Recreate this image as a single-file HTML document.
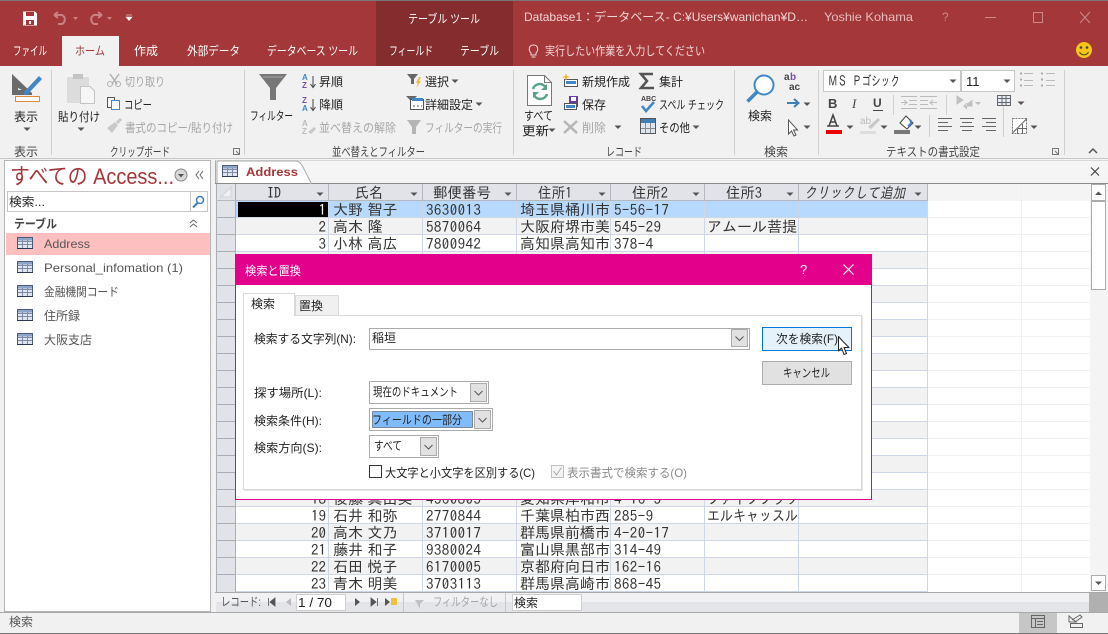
<!DOCTYPE html>
<html lang="ja"><head><meta charset="utf-8"><title>Access</title>
<style>
html,body{margin:0;padding:0;width:1108px;height:634px;overflow:hidden;background:#fff}
svg{display:block}
text{white-space:pre}
.u{font-family:"Liberation Sans","Noto Sans CJK JP",sans-serif;font-size:12px;fill:#444}
.d{fill:#222}.x{fill:#a6a6a6}.w{fill:#fff}
.g{font-family:"IPAGothic","Liberation Sans",sans-serif;font-size:15px;fill:#333;word-spacing:-3px}
.z{letter-spacing:.4px}
.j{font-family:"IPAGothic","Liberation Sans",sans-serif;font-size:15px;fill:#333}
.n{font-family:"Liberation Sans","Noto Sans CJK JP",sans-serif;font-size:12px;fill:#555}
.l{stroke:#cfd7e6;stroke-width:1;fill:none}
.s{fill:none;stroke:#666;stroke-width:1}
</style></head><body>
<svg xmlns="http://www.w3.org/2000/svg" width="1108" height="634" viewBox="0 0 1108 634">
<defs>
<g id="tbl"><rect x=".5" y=".5" width="15" height="11" fill="#dfe6f2" stroke="#4a5a78"/><rect x="1" y="1" width="14" height="2.5" fill="#8ea4c8"/><path d="M1 4.500H15M1 7.500H15M5.500 3V11M10.500 3V11" stroke="#7e8ca6" fill="none"/><path d="M0 11.500H16" stroke="#2b3a58"/></g>
<path id="dn" d="M-3.500 -1.500H3.500L0 2Z" fill="#555"/>
<path id="chev" d="M-4 -2L0 2L4 -2" fill="none" stroke="#555"/>
</defs>

<!-- window frame -->
<rect width="1108" height="634" fill="#f1f1f1"/>
<rect width="1108" height="66" fill="#a4373a"/>
<rect width="1108" height="1" fill="#777"/>
<rect x="376" y="1" width="137" height="65" fill="#842c2e"/>
<rect x="62" y="36" width="57" height="30" fill="#f1f1f1"/>

<!-- QAT -->
<path d="M23 11.500H35L37 13.500V25.500H23Z" fill="#fff"/>
<rect x="26" y="12" width="8" height="4" fill="#a4373a"/><rect x="26" y="20" width="8" height="5" fill="#a4373a"/><rect x="29" y="21" width="2" height="3" fill="#fff"/>
<path d="M54 15L58 12M54 15L58 18M54 15H62A5 5 0 0 1 62 24H58" fill="none" stroke="#c98184" stroke-width="2"/>
<path d="M73 17H78L75.500 20Z" fill="#c98184"/>
<path d="M102 15L98 12M102 15L98 18M102 15H94A5 5 0 0 0 94 24H98" fill="none" stroke="#c98184" stroke-width="2"/>
<path d="M107 17H112L109.500 20Z" fill="#c98184"/>
<path d="M126 15H132M126 17H132L129 20.500Z" fill="#fff" stroke="#fff" stroke-width=".6"/>

<text class="u w" x="408" y="23" textLength="72" lengthAdjust="spacingAndGlyphs">テーブル ツール</text>
<text class="u" style="fill:#f2d4d4" x="524" y="21" textLength="284" lengthAdjust="spacingAndGlyphs">Database1：データベース- C:¥Users¥wanichan¥D…</text>
<text class="u" style="fill:#e4bcbc" x="824" y="21" textLength="89" lengthAdjust="spacingAndGlyphs">Yoshie Kohama</text>
<text class="u" style="fill:#c98a8c" x="942" y="21">?</text>
<path d="M985 17.500H996" stroke="#c98a8c"/><rect x="1033.500" y="12.500" width="9" height="10" fill="none" stroke="#c98a8c"/><path d="M1080 12L1090 23M1090 12L1080 23" stroke="#c98a8c"/>

<!-- tabs -->
<text class="u w" x="13" y="55" textLength="34" lengthAdjust="spacingAndGlyphs">ファイル</text>
<text class="u" style="fill:#a4373a" x="75" y="55" textLength="30" lengthAdjust="spacingAndGlyphs">ホーム</text>
<text class="u w" x="134" y="55" textLength="24" lengthAdjust="spacingAndGlyphs">作成</text>
<text class="u w" x="187" y="55" textLength="53" lengthAdjust="spacingAndGlyphs">外部データ</text>
<text class="u w" x="267" y="55" textLength="91" lengthAdjust="spacingAndGlyphs">データベース ツール</text>
<text class="u w" x="389" y="55" textLength="44" lengthAdjust="spacingAndGlyphs">フィールド</text>
<text class="u w" x="460" y="55" textLength="39" lengthAdjust="spacingAndGlyphs">テーブル</text>
<path d="M531 53C528 50 529 45 533.500 45S539 50 536 53V55H531ZM531.500 57H535.500" fill="none" stroke="#f0d8d8"/>
<text class="u" style="fill:#f0d8d8" x="545" y="55" textLength="160" lengthAdjust="spacingAndGlyphs">実行したい作業を入力してください</text>
<circle cx="1084" cy="50" r="8" fill="#f5c518"/><circle cx="1081" cy="47.500" r="1.300" fill="#444"/><circle cx="1087" cy="47.500" r="1.300" fill="#444"/><path d="M1079.500 52A5 5 0 0 0 1088.500 52" fill="none" stroke="#444"/>

<!-- ribbon dividers -->
<path d="M51.500 70V155M244.500 70V155M513.500 70V155M734.500 70V155M818.500 70V155M1064.500 70V155" stroke="#d0d0d0"/>
<rect y="158" width="1108" height="1" fill="#c6c6c6"/>

<!-- 表示 -->
<path d="M12 74L32 93V95H12Z M18 88V90H22Z" fill="#6b6b6b" fill-rule="evenodd"/>
<path d="M24 92L39 76L42 79L27 95H24Z" fill="#3f87c6"/>
<rect x="15.500" y="96.500" width="24" height="5" fill="#fff" stroke="#e08a3a"/>
<text class="u d" x="14" y="121" textLength="24" lengthAdjust="spacingAndGlyphs">表示</text><use href="#dn" x="27" y="129"/>
<text class="u" x="14" y="156" textLength="24" lengthAdjust="spacingAndGlyphs">表示</text>

<!-- clipboard -->
<rect x="67" y="77" width="22" height="26" fill="#dcdcdc"/><rect x="73" y="74" width="10" height="5" fill="#c4c4c4"/>
<path d="M80.500 86.500H90L94.500 91V103.500H80.500Z" fill="#f6f6f6" stroke="#c4c4c4"/>
<text class="u d" x="58" y="121" textLength="42" lengthAdjust="spacingAndGlyphs">貼り付け</text><use href="#dn" x="81" y="129"/>
<path d="M110 74L117 84M119 74L112 84" stroke="#b0b0b0" stroke-width="1.500"/><circle cx="110" cy="84" r="2.500" fill="none" stroke="#b0b0b0"/><circle cx="118" cy="84" r="2.500" fill="none" stroke="#b0b0b0"/>
<text class="u x" x="125" y="86" textLength="40" lengthAdjust="spacingAndGlyphs">切り取り</text>
<rect x="107.500" y="97.500" width="7" height="10" fill="#fff" stroke="#555"/><rect x="111.500" y="100.500" width="8" height="9" fill="#fff" stroke="#3f87c6"/>
<text class="u d" x="124" y="109" textLength="28" lengthAdjust="spacingAndGlyphs">コピー</text>
<path d="M107 128L115 122L118 125L112 133ZM116 122L120 118L122 120L118 124Z" fill="#c8c8c8"/>
<text class="u x" x="125" y="132" textLength="108" lengthAdjust="spacingAndGlyphs">書式のコピー/貼り付け</text>
<text class="u" x="110" y="156" textLength="60" lengthAdjust="spacingAndGlyphs">クリップボード</text>
<path d="M233.500 148.500H239.500V154.500H233.500ZM236 151L239 154" fill="none" stroke="#777"/>

<!-- sort filter -->
<path d="M259 74H287L276 88V100H270V88Z" fill="#777"/><path d="M263 77H283" stroke="#aaa"/>
<text class="u d" x="250" y="120" textLength="43" lengthAdjust="spacingAndGlyphs">フィルター</text>
<text style="font:bold 8px 'Liberation Sans',sans-serif;fill:#3f87c6" x="302" y="80">A</text><text style="font:bold 8px 'Liberation Sans',sans-serif;fill:#7a4fa8" x="302" y="88">Z</text>
<path d="M313 76V87M310.500 84L313 87.500L315.500 84" fill="none" stroke="#444"/>
<text class="u d" x="319" y="86" textLength="24" lengthAdjust="spacingAndGlyphs">昇順</text>
<text style="font:bold 8px 'Liberation Sans',sans-serif;fill:#7a4fa8" x="302" y="103">Z</text><text style="font:bold 8px 'Liberation Sans',sans-serif;fill:#3f87c6" x="302" y="111">A</text>
<path d="M313 99V110M310.500 107L313 110.500L315.500 107" fill="none" stroke="#444"/>
<text class="u d" x="319" y="109" textLength="24" lengthAdjust="spacingAndGlyphs">降順</text>
<text style="font:bold 8px 'Liberation Sans',sans-serif;fill:#bbb" x="302" y="126">A</text><text style="font:bold 8px 'Liberation Sans',sans-serif;fill:#bbb" x="302" y="134">Z</text>
<path d="M308 132L314 127L316 129L311 134Z" fill="#c8c8c8"/>
<text class="u x" x="319" y="132" textLength="77" lengthAdjust="spacingAndGlyphs">並べ替えの解除</text>
<path d="M407 74H418L414 79V84H411V79Z" fill="#666"/><path d="M419 77L416 83H418L416 88L421 81H419L421 77Z" fill="#f0b840"/>
<text class="u d" x="425" y="86" textLength="24" lengthAdjust="spacingAndGlyphs">選択</text><use href="#dn" x="455" y="81"/>
<path d="M406 96H417L413 100V103H410V100Z" fill="#666"/><rect x="410.500" y="99.500" width="13" height="10" fill="#fff" stroke="#555"/><rect x="412" y="98" width="11" height="3" fill="#3f87c6"/><path d="M413 106H415M417 106H419M421 106H422" stroke="#555"/>
<text class="u d" x="425" y="109" textLength="48" lengthAdjust="spacingAndGlyphs">詳細設定</text><use href="#dn" x="479" y="104"/>
<path d="M407 120H421L416 127V134H412V127Z" fill="#b5b5b5"/>
<text class="u x" x="425" y="132" textLength="77" lengthAdjust="spacingAndGlyphs">フィルターの実行</text>
<text class="u" x="332" y="156" textLength="93" lengthAdjust="spacingAndGlyphs">並べ替えとフィルター</text>

<!-- record group -->
<path d="M527.500 75.500H544.500L551.500 82.500V105.500H527.500Z" fill="#fff" stroke="#777"/><path d="M544.500 75.500V82.500H551.500" fill="none" stroke="#777"/>
<path d="M533 89A7 7 0 0 1 546 88M547 94A7 7 0 0 1 534 95" fill="none" stroke="#5aa08c" stroke-width="2.500"/><path d="M547 84V90H541Z M533 98V92H539Z" fill="#5aa08c"/>
<text class="u d" x="524" y="120" textLength="29" lengthAdjust="spacingAndGlyphs">すべて</text>
<text class="u d" x="522" y="135" textLength="27" lengthAdjust="spacingAndGlyphs">更新</text><use href="#dn" x="552" y="130"/>
<rect x="564.500" y="79.500" width="13" height="7" fill="#fff" stroke="#555"/><rect x="566" y="81" width="10" height="3" fill="#3f87c6"/><path d="M566 73L567 76L570 77L567 78L566 81L565 78L562 77L565 76Z" fill="#f0b840"/>
<text class="u d" x="582" y="86" textLength="48" lengthAdjust="spacingAndGlyphs">新規作成</text>
<rect x="569" y="96" width="9" height="11" fill="#6a3d9a"/><rect x="571" y="97" width="5" height="4" fill="#fff"/><rect x="564.500" y="103.500" width="12" height="6" fill="#fff" stroke="#555"/><rect x="566" y="105" width="9" height="3" fill="#3f87c6"/>
<text class="u d" x="582" y="109" textLength="24" lengthAdjust="spacingAndGlyphs">保存</text>
<path d="M564 121L577 133M577 121L564 133" stroke="#b5b5b5" stroke-width="2.500"/>
<text class="u x" x="582" y="132" textLength="24" lengthAdjust="spacingAndGlyphs">削除</text><use href="#dn" x="618" y="127"/>
<path d="M653 74H641L647 81L641 88H654" fill="none" stroke="#555" stroke-width="2.500"/>
<text class="u d" x="659" y="86" textLength="24" lengthAdjust="spacingAndGlyphs">集計</text>
<text style="font:bold 7px 'Liberation Sans',sans-serif;fill:#444" x="641" y="101">ABC</text><path d="M642 106L646 111L654 102" fill="none" stroke="#3f87c6" stroke-width="2.500"/>
<text class="u d" x="659" y="109" textLength="65" lengthAdjust="spacingAndGlyphs">スペル チェック</text>
<rect x="640.500" y="118.500" width="15" height="15" fill="#dfe6f2" stroke="#555"/><rect x="641" y="119" width="14" height="4" fill="#3f7fb8"/><path d="M641 128.500H655M645.500 123V133M650.500 123V133" stroke="#888"/>
<text class="u d" x="659" y="132" textLength="31" lengthAdjust="spacingAndGlyphs">その他</text><use href="#dn" x="696" y="127"/>
<text class="u" x="606" y="156" textLength="36" lengthAdjust="spacingAndGlyphs">レコード</text>

<!-- find -->
<circle cx="764" cy="85" r="9.500" fill="#fff" stroke="#3f87c6" stroke-width="2"/><path d="M757 92L747.500 101.500" stroke="#3f87c6" stroke-width="3.500"/>
<text class="u d" x="748" y="120" textLength="24" lengthAdjust="spacingAndGlyphs">検索</text>
<text style="font:bold 10px 'Liberation Sans',sans-serif;fill:#444" x="784" y="80">a</text><text style="font:bold 10px 'Liberation Sans',sans-serif;fill:#7a4fa8" x="790" y="80">b</text><text style="font:bold 10px 'Liberation Sans',sans-serif;fill:#444" x="789" y="90">ac</text>
<path d="M787 103H798M794 99L798.500 103L794 107" fill="none" stroke="#3f7fb8" stroke-width="2"/><use href="#dn" x="807" y="104"/>
<path d="M788.500 120V134L791.500 131L794 136L796 135L793.500 130H797.500Z" fill="#fff" stroke="#555"/><use href="#dn" x="807" y="127"/>
<text class="u" x="764" y="156" textLength="24" lengthAdjust="spacingAndGlyphs">検索</text>

<!-- text format -->
<rect x="823.500" y="70.500" width="137" height="21" fill="#fff" stroke="#c6c6c6"/><rect x="961.500" y="70.500" width="53" height="21" fill="#fff" stroke="#c6c6c6"/>
<text class="j" style="font-size:14px" x="828" y="86" textLength="72" lengthAdjust="spacingAndGlyphs">ＭＳ Ｐゴシック</text><use href="#dn" x="953" y="81"/>
<text class="u d" style="font-size:13px" x="966" y="86">11</text><use href="#dn" x="1007" y="81"/>
<path d="M1024 73.500H1033M1024 80.500H1033M1024 85.500H1033M1046 73.500H1055M1046 80.500H1055M1046 85.500H1055" stroke="#bbb"/>
<path d="M1020 73.500h2M1020 79.500h2M1020 85.500h2M1041 73.500h2M1041 79.500h2M1041 85.500h2" stroke="#aaa" stroke-width="2"/>
<text style="font:bold 13px 'Liberation Sans',sans-serif;fill:#444" x="828" y="108">B</text>
<text style="font:italic 13px 'Liberation Serif',serif;fill:#444" x="852" y="108">I</text>
<text style="font:bold 12px 'Liberation Sans',sans-serif;fill:#444" x="873" y="107">U</text><path d="M873 110.500H883" stroke="#444"/>
<path d="M893.500 95V115M946.500 95V115M1003.500 95V115" stroke="#d0d0d0"/>
<path d="M901 96.500H917M909 100.500H917M909 104.500H917M901 108.500H917M901 102.500H907M904 100L907 102.500L904 105M920 96.500H937M920 100.500H928M920 104.500H928M920 108.500H937M930 102.500H937M933 100L930 102.500L933 105" fill="none" stroke="#bbb"/>
<path d="M957 96V104L963 100ZM972 100V106H964M967 103L964 106L967 109" fill="#c0c0c0" stroke="#c0c0c0"/><path d="M975 102H981L978 105Z" fill="#bbb"/>
<rect x="997.500" y="95.500" width="13" height="10" fill="#e6ecf6" stroke="#666"/><path d="M998 98.500H1010M998 102.500H1010M1002 96V105M1006 96V105" stroke="#666"/>
<use href="#dn" x="1021" y="103"/>
<path d="M827 126H839M829 126L833 115L837 126M830 122H836" fill="none" stroke="#444" stroke-width="1.500"/><rect x="826" y="130" width="16" height="4" fill="#e00"/><use href="#dn" x="850" y="127"/>
<text style="font:10px 'Liberation Sans',sans-serif;fill:#bbb" x="860" y="124">ab</text><path d="M868 127L878 118L880 120L871 129Z" fill="#c8c8c8"/><rect x="860" y="131" width="16" height="3" fill="#ddd"/><use href="#dn" x="884" y="127"/>
<path d="M900 123L906 116L913 123L907 129Z" fill="#fff" stroke="#444"/><path d="M910 120C912 122 911 125 908 126" fill="none" stroke="#3f7fb8" stroke-width="2"/><rect x="894" y="130" width="16" height="4" fill="#777"/><use href="#dn" x="918" y="127"/>
<path d="M929.500 115V137M1003.500 115V137" stroke="#d0d0d0"/>
<path d="M938 119.500H952M938 123.500H948M938 127.500H952M938 131.500H948M960 119.500H974M962 123.500H972M960 127.500H974M962 131.500H972M982 119.500H996M986 123.500H996M982 127.500H996M986 131.500H996" stroke="#666" transform="translate(0,-1)"/>
<rect x="1012.500" y="118.500" width="14" height="15" fill="#fff" stroke="#777" stroke-dasharray="2 1"/><path d="M1012 133.500L1027 118.500M1017.500 129V134M1022.500 124V134M1018 128.500H1027" stroke="#666" fill="none"/><use href="#dn" x="1034" y="127"/>
<text class="u" x="886" y="156" textLength="94" lengthAdjust="spacingAndGlyphs">テキストの書式設定</text>
<path d="M1052.500 148.500H1058.500V154.500H1052.500ZM1055 151L1058 154" fill="none" stroke="#777"/>
<path d="M1089 153L1093 149L1097 153" fill="none" stroke="#555" stroke-width="1.500"/>

<!-- nav pane -->
<rect x="0" y="159" width="215" height="453" fill="#f1f1f1"/>
<rect x="4.500" y="160.500" width="206" height="451" fill="#fff" stroke="#b5b5b5"/>
<text class="u" style="font-size:22px;fill:#a4373a" x="10" y="184" textLength="164" lengthAdjust="spacingAndGlyphs">すべての Access...</text>
<circle cx="181" cy="175" r="6" fill="#d8d8d8" stroke="#888"/><path d="M178 174H184L181 177.500Z" fill="#555"/>
<path d="M199 171L196 175L199 179M203 171L200 175L203 179" fill="none" stroke="#666"/>
<rect x="7.500" y="191.500" width="200" height="20" fill="#fff" stroke="#c6c6c6"/><path d="M190.500 192V211" stroke="#c6c6c6"/>
<text class="u d" x="9" y="206" textLength="36" lengthAdjust="spacingAndGlyphs">検索...</text>
<circle cx="200" cy="200" r="3.500" fill="none" stroke="#3f7fb8" stroke-width="1.500"/><path d="M197.500 203L193 207.500" stroke="#3f7fb8" stroke-width="2"/>
<text class="u" style="font-weight:700" x="14" y="228" textLength="43" lengthAdjust="spacingAndGlyphs">テーブル</text>
<path d="M190 223L193.500 220L197 223M190 227L193.500 224L197 227" fill="none" stroke="#666"/>
<rect x="6" y="233" width="204" height="22" fill="#fdbfbf"/>
<use href="#tbl" x="17" y="237"/><use href="#tbl" x="17" y="261"/><use href="#tbl" x="17" y="285"/><use href="#tbl" x="17" y="309"/><use href="#tbl" x="17" y="333"/>
<text class="n" x="44" y="248" textLength="46" lengthAdjust="spacingAndGlyphs">Address</text>
<text class="n" x="44" y="272" textLength="139" lengthAdjust="spacingAndGlyphs">Personal_infomation (1)</text>
<text class="n" x="44" y="296" textLength="75" lengthAdjust="spacingAndGlyphs">金融機関コード</text>
<text class="n" x="44" y="320" textLength="36" lengthAdjust="spacingAndGlyphs">住所録</text>
<text class="n" x="44" y="344" textLength="48" lengthAdjust="spacingAndGlyphs">大阪支店</text>

<!-- doc tab strip -->
<rect x="215" y="159" width="893" height="25" fill="#f5f5f5"/>
<rect x="215" y="160" width="893" height="1" fill="#d8d8d8"/>
<path d="M215.500 183V160.500" stroke="#aaa"/>
<path d="M217 184V163Q217 161 219 161H296Q300 161 303 167L311 183V184Z" fill="#fff" stroke="#aaa"/>
<use href="#tbl" x="222" y="165"/>
<text class="u" style="font-weight:700;fill:#a4373a" x="246" y="176" textLength="52" lengthAdjust="spacingAndGlyphs">Address</text>
<path d="M1091 167.500L1099 175.500M1099 167.500L1091 175.500" stroke="#444" stroke-width="1.200"/>
<path d="M215 183.500H310M311 183.500H1108" stroke="#8a8a8a"/>

<!-- datasheet -->
<rect x="216" y="184" width="892" height="408" fill="#fff"/>
<rect x="216" y="184" width="19" height="408" fill="#e1e3e8"/>
<rect x="216" y="184" width="711" height="17" fill="#e1e3e8"/>
<rect x="927" y="184" width="163" height="17" fill="#f4f4f4"/>
<path d="M221 197L231 187V197Z" fill="#eef0f3" stroke="#d0d3d8"/>
<!-- alternating rows -->
<rect x="235" y="218" width="692" height="17" fill="#f2f2f2"/><rect x="235" y="252" width="692" height="17" fill="#f2f2f2"/><rect x="235" y="286" width="692" height="17" fill="#f2f2f2"/><rect x="235" y="320" width="692" height="17" fill="#f2f2f2"/><rect x="235" y="354" width="692" height="17" fill="#f2f2f2"/><rect x="235" y="388" width="692" height="17" fill="#f2f2f2"/><rect x="235" y="422" width="692" height="17" fill="#f2f2f2"/><rect x="235" y="456" width="692" height="17" fill="#f2f2f2"/><rect x="235" y="490" width="692" height="17" fill="#f2f2f2"/><rect x="235" y="524" width="692" height="17" fill="#f2f2f2"/><rect x="235" y="558" width="692" height="17" fill="#f2f2f2"/>
<rect x="235" y="201" width="692" height="17" fill="#b7d9fd"/>
<rect x="238" y="202" width="90" height="15" fill="#000"/>
<!-- faint lines right area -->
<path d="M927 217.500H1090M927 234.500H1090M927 251.500H1090M927 268.500H1090M927 285.500H1090M927 302.500H1090M927 319.500H1090M927 336.500H1090M927 353.500H1090M927 370.500H1090M927 387.500H1090M927 404.500H1090M927 421.500H1090M927 438.500H1090M927 455.500H1090M927 472.500H1090M927 489.500H1090M927 506.500H1090M927 523.500H1090M927 540.500H1090M927 557.500H1090M927 574.500H1090M1021.500 184V592" stroke="#f1f1f1"/>
<!-- grid lines -->
<path class="l" d="M235 217.500H927M235 234.500H927M235 251.500H927M235 268.500H927M235 285.500H927M235 302.500H927M235 319.500H927M235 336.500H927M235 353.500H927M235 370.500H927M235 387.500H927M235 404.500H927M235 421.500H927M235 438.500H927M235 455.500H927M235 472.500H927M235 489.500H927M235 506.500H927M235 523.500H927M235 540.500H927M235 557.500H927M235 574.500H927M235 591.500H927M328.500 201V592M422.500 201V592M516.500 201V592M610.500 201V592M704.500 201V592M798.500 201V592M927.500 201V592"/>
<path d="M216 217.500H235M216 234.500H235M216 251.500H235M216 268.500H235M216 285.500H235M216 302.500H235M216 319.500H235M216 336.500H235M216 489.500H235M216 506.500H235M216 523.500H235M216 540.500H235M216 557.500H235M216 574.500H235M216 353.500H235M216 370.500H235M216 387.500H235M216 404.500H235M216 421.500H235M216 438.500H235M216 455.500H235M216 472.500H235M235.500 184V592M216.500 184V592" stroke="#a9adb5"/>
<path d="M216 200.500H927M328.500 184V201M422.500 184V201M516.500 184V201M610.500 184V201M704.500 184V201M798.500 184V201M927.500 184V201" stroke="#b5b8bf"/>
<!-- headers -->
<text class="g" x="267" y="198" textLength="14" lengthAdjust="spacingAndGlyphs">ID</text>
<text class="g" x="355" y="198" textLength="28" lengthAdjust="spacingAndGlyphs">氏名</text>
<text class="g" x="433" y="198" textLength="58" lengthAdjust="spacingAndGlyphs">郵便番号</text>
<text class="g" x="538" y="198" textLength="34" lengthAdjust="spacingAndGlyphs">住所1</text>
<text class="g" x="632" y="198" textLength="36" lengthAdjust="spacingAndGlyphs">住所2</text>
<text class="g" x="726" y="198" textLength="36" lengthAdjust="spacingAndGlyphs">住所3</text>
<text class="g" style="font-style:italic" x="804" y="198" textLength="101" lengthAdjust="spacingAndGlyphs">クリックして追加</text>
<use href="#dn" x="320" y="194"/><use href="#dn" x="414" y="194"/><use href="#dn" x="508" y="194"/><use href="#dn" x="602" y="194"/><use href="#dn" x="696" y="194"/><use href="#dn" x="790" y="194"/><use href="#dn" x="918" y="194"/>

<!-- data -->
<text class="g" style="fill:#fff" x="326" y="215" text-anchor="end">1</text><text class="g" x="333" y="215">大野 智子</text><text class="g z" x="426" y="215">3630013</text><text class="g" x="520" y="215">埼玉県桶川市</text><text class="g z" x="614" y="215">5-56-17</text>
<text class="g" x="326" y="232" text-anchor="end">2</text><text class="g" x="333" y="232">高木 隆</text><text class="g z" x="426" y="232">5870064</text><text class="g" x="520" y="232">大阪府堺市美</text><text class="g z" x="614" y="232">545-29</text>
<svg x="706" y="218" width="92" height="17"><text class="g" x="1" y="14">アムール菩提寺</text></svg>
<text class="g" x="326" y="249" text-anchor="end">3</text><text class="g" x="333" y="249">小林 高広</text><text class="g z" x="426" y="249">7800942</text><text class="g" x="520" y="249">高知県高知市</text><text class="g z" x="614" y="249">378-4</text>
<text class="g" x="326" y="504" text-anchor="end">18</text><text class="g" x="333" y="504">後藤 真由美</text><text class="g z" x="426" y="504">4560805</text><text class="g" x="520" y="504">愛知県岸和市</text><text class="g z" x="614" y="504">4-16-5</text><text class="g" x="707" y="504" textLength="91" lengthAdjust="spacingAndGlyphs">ファイブフラワ</text>
<text class="g" x="326" y="521" text-anchor="end">19</text><text class="g" x="333" y="521">石井 和弥</text><text class="g z" x="426" y="521">2770844</text><text class="g" x="520" y="521">千葉県柏市西</text><text class="g z" x="614" y="521">285-9</text><text class="g" x="707" y="521" textLength="91" lengthAdjust="spacingAndGlyphs">エルキャッスル</text>
<text class="g" x="326" y="538" text-anchor="end">20</text><text class="g" x="333" y="538">高木 文乃</text><text class="g z" x="426" y="538">3710017</text><text class="g" x="520" y="538">群馬県前橋市</text><text class="g z" x="614" y="538">4-20-17</text>
<text class="g" x="326" y="555" text-anchor="end">21</text><text class="g" x="333" y="555">藤井 和子</text><text class="g z" x="426" y="555">9380024</text><text class="g" x="520" y="555">富山県黒部市</text><text class="g z" x="614" y="555">314-49</text>
<text class="g" x="326" y="572" text-anchor="end">22</text><text class="g" x="333" y="572">石田 悦子</text><text class="g z" x="426" y="572">6170005</text><text class="g" x="520" y="572">京都府向日市</text><text class="g z" x="614" y="572">162-16</text>
<text class="g" x="326" y="589" text-anchor="end">23</text><text class="g" x="333" y="589">青木 明美</text><text class="g z" x="426" y="589">3703113</text><text class="g" x="520" y="589">群馬県高崎市</text><text class="g z" x="614" y="589">868-45</text>

<!-- scrollbar -->
<rect x="1090" y="184" width="18" height="408" fill="#f4f4f4"/>
<rect x="1091.500" y="184.500" width="14" height="16" fill="#fff" stroke="#ababab"/>
<rect x="1091.500" y="201.500" width="14" height="88" fill="#fff" stroke="#ababab"/>
<rect x="1091.500" y="575.500" width="14" height="15" fill="#fff" stroke="#ababab"/>
<path d="M1095 195H1102L1098.500 191.500Z" fill="#555"/><path d="M1095 581.500H1102L1098.500 585Z" fill="#555"/>

<!-- record nav -->
<rect x="216" y="592" width="873" height="10" fill="#f1f1f4"/><rect x="216" y="602" width="873" height="10" fill="#e4e5e9"/>
<rect x="215" y="592" width="893" height="1" fill="#a9a9a9"/>
<rect x="1089" y="593" width="19" height="19" fill="#b0b0b0"/>
<text class="u" style="fill:#555" x="221" y="606" textLength="40" lengthAdjust="spacingAndGlyphs">レコード:</text>
<path d="M268.500 598V606M275 598V606L270 602Z" fill="#555" stroke="#555" stroke-width=".8"/><path d="M291 598V606L286 602Z" fill="#bbb"/>
<rect x="296.500" y="594.500" width="49" height="16" fill="#fff" stroke="#d0d0d0"/>
<text class="u d" style="font-size:13px" x="298" y="607" textLength="34" lengthAdjust="spacingAndGlyphs">1 / 70</text>
<path d="M355 598V606L360 602Z" fill="#555"/><path d="M371 598V606L376 602ZM377.500 598V606" fill="#555" stroke="#555" stroke-width=".8"/><path d="M385 598V606L390 602Z" fill="#555"/><rect x="391" y="598" width="6" height="7" fill="#f0c040"/>
<rect x="403" y="593" width="1" height="19" fill="#c8c8c8"/><rect x="505" y="593" width="1" height="19" fill="#c8c8c8"/>
<path d="M415 600H424L420 604V609L419 607Z" fill="#c0c0c0"/>
<text class="u x" x="433" y="606" textLength="65" lengthAdjust="spacingAndGlyphs">フィルターなし</text>
<rect x="512.500" y="594.500" width="69" height="16" fill="#fff" stroke="#d0d0d0"/>
<text class="u d" x="514" y="607" textLength="24" lengthAdjust="spacingAndGlyphs">検索</text>

<!-- status -->
<rect x="0" y="612" width="1108" height="22" fill="#f1f1f1"/>
<rect x="0" y="612" width="1108" height="1" fill="#a9a9a9"/><rect x="0" y="633" width="1108" height="1" fill="#777"/>
<text class="u" style="fill:#555" x="9" y="626" textLength="24" lengthAdjust="spacingAndGlyphs">検索</text>
<rect x="1019" y="613" width="38" height="20" fill="#c6c6c6"/>
<rect x="1031.500" y="615.500" width="13" height="12" fill="none" stroke="#666"/><path d="M1031.500 618.500H1044.500M1035.500 618V628M1037 621.500H1043M1037 624.500H1043" stroke="#666" fill="none"/>
<path d="M1069 616V622H1076ZM1072 620L1080 615L1082 617L1075 622" fill="none" stroke="#666"/><rect x="1070.500" y="623.500" width="12" height="4" fill="none" stroke="#666"/>

<!-- dialog -->
<rect x="235.500" y="254.500" width="636" height="245" fill="#fff" stroke="#e3008a"/>
<rect x="235" y="254" width="637" height="31" fill="#e3008a"/>
<text class="u w" x="245" y="275" textLength="56" lengthAdjust="spacingAndGlyphs">検索と置換</text>
<text class="u w" x="800" y="274" style="font-size:13px">?</text>
<path d="M843.500 264.500L853.500 274.500M853.500 264.500L843.500 274.500" stroke="#fff" stroke-width="1.200"/>
<rect x="243.500" y="315.500" width="618" height="174" fill="#fff" stroke="#d9d9d9"/>
<path d="M862.500 316V490.500H244" fill="none" stroke="#e6e6e6" stroke-width="1"/>
<rect x="295.500" y="295.500" width="43" height="20" fill="#f0f0f0" stroke="#d9d9d9"/>
<path d="M243.500 316V293.500H294.500V316" fill="#fff" stroke="#d9d9d9"/>
<text class="u d" x="251" y="308" textLength="24" lengthAdjust="spacingAndGlyphs">検索</text>
<text class="u d" x="299" y="310" textLength="24" lengthAdjust="spacingAndGlyphs">置換</text>

<text class="u d" x="254" y="343" textLength="102" lengthAdjust="spacingAndGlyphs">検索する文字列(N):</text>
<rect x="369.500" y="328.500" width="380" height="21" fill="#fff" stroke="#ababab"/>
<text class="u d" x="372" y="342" textLength="24" lengthAdjust="spacingAndGlyphs">稲垣</text>
<rect x="731.500" y="329.500" width="16" height="17" fill="#e1e1e1" stroke="#ababab"/><use href="#chev" x="739.500" y="338.500"/>

<rect x="762.500" y="327.500" width="89" height="23" fill="#e5f1fb" stroke="#0078d7"/>
<text class="u d" x="776" y="343" textLength="62" lengthAdjust="spacingAndGlyphs">次を検索(F)</text>
<rect x="762.500" y="361.500" width="89" height="23" fill="#e1e1e1" stroke="#adadad"/>
<text class="u d" x="783" y="377" textLength="47" lengthAdjust="spacingAndGlyphs">キャンセル</text>

<text class="u d" x="254" y="397" textLength="68" lengthAdjust="spacingAndGlyphs">探す場所(L):</text>
<rect x="369.500" y="381.500" width="119" height="22" fill="#fff" stroke="#ababab"/>
<text class="u d" x="373" y="396" textLength="85" lengthAdjust="spacingAndGlyphs">現在のドキュメント</text>
<rect x="470.500" y="383.500" width="16" height="18" fill="#e1e1e1" stroke="#ababab"/><use href="#chev" x="478.500" y="393"/>

<text class="u d" x="254" y="425" textLength="68" lengthAdjust="spacingAndGlyphs">検索条件(H):</text>
<rect x="369.500" y="408.500" width="123" height="22" fill="#fff" stroke="#ababab"/>
<rect x="372.500" y="411.500" width="100" height="16" fill="#80bcfb" stroke="#333" stroke-dasharray="1 1"/>
<text class="u d" x="372" y="424" textLength="90" lengthAdjust="spacingAndGlyphs">フィールドの一部分</text>
<rect x="474.500" y="410.500" width="16" height="18" fill="#e1e1e1" stroke="#ababab"/><use href="#chev" x="482.500" y="420"/>

<text class="u d" x="254" y="452" textLength="68" lengthAdjust="spacingAndGlyphs">検索方向(S):</text>
<rect x="369.500" y="435.500" width="69" height="22" fill="#fff" stroke="#ababab"/>
<text class="u d" x="374" y="450" textLength="28" lengthAdjust="spacingAndGlyphs">すべて</text>
<rect x="420.500" y="437.500" width="16" height="18" fill="#e1e1e1" stroke="#ababab"/><use href="#chev" x="428.500" y="447"/>

<rect x="369.500" y="465.500" width="12" height="12" fill="#fff" stroke="#333"/>
<text class="u d" x="385" y="477" textLength="150" lengthAdjust="spacingAndGlyphs">大文字と小文字を区別する(C)</text>
<rect x="551.500" y="465.500" width="12" height="12" fill="#f4f4f4" stroke="#c0c0c0"/><path d="M553.500 471L556.500 475L561.500 467.500" fill="none" stroke="#aaa"/>
<text class="u" style="fill:#8a8a8a" x="567" y="477" textLength="120" lengthAdjust="spacingAndGlyphs">表示書式で検索する(O)</text>

<!-- cursor -->
<path d="M838.500 336.500V351L841.500 348L844 354.500L846.500 353.500L844 347.500H849L843 341.500Z" fill="#fff" stroke="#222" stroke-linejoin="round"/>
</svg>
</body></html>
